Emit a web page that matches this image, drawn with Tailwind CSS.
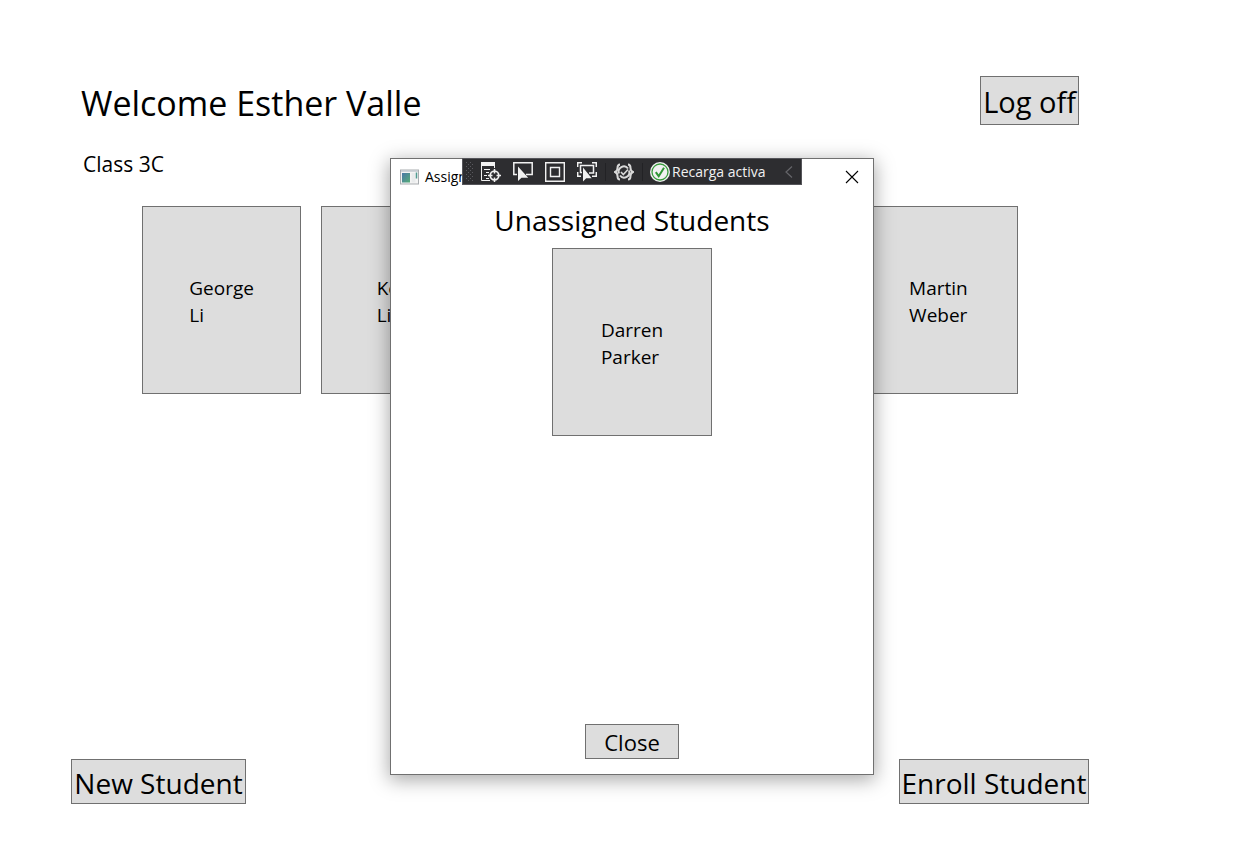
<!DOCTYPE html>
<html lang="en">
<head>
<meta charset="utf-8">
<title>Class 3C</title>
<script src="https://cdn.jsdelivr.net/npm/@tailwindcss/browser@4"></script>
</head>
<body class="bg-white text-black font-['Open_Sans','Noto_Sans',sans-serif]">
<div class="relative flex min-h-screen flex-col pt-[76px] pb-16">
  <header class="flex items-start justify-between pl-[81px] pr-44">
    <h1 class="pt-[3px] text-[34px] leading-[48px]">Welcome Esther Valle</h1>
    <button class="h-[49px] border border-[#707070] bg-[#dddddd] px-0.5 pt-0.5 text-[29px] leading-[46px]">Log off</button>
  </header>
  <h2 class="pl-[83px] pt-[21px] text-[21px] leading-8">Class 3C</h2>
  <main class="flex flex-1 items-start gap-5 pl-[142px] pr-[237px] pt-[26px] text-[19px] leading-[27px]">
    <button class="flex h-[188px] flex-1 items-center justify-center border border-[#707070] bg-[#dddddd] pt-1 text-left"><span>George<br>Li</span></button>
    <button class="flex h-[188px] flex-1 items-center justify-center border border-[#707070] bg-[#dddddd] pt-1 text-left"><span>Kevin<br>Liu</span></button>
    <button class="h-[188px] flex-1 border border-[#707070] bg-[#dddddd]" aria-label="Student"></button>
    <button class="h-[188px] flex-1 border border-[#707070] bg-[#dddddd]" aria-label="Student"></button>
    <button class="flex h-[188px] flex-1 items-center justify-center border border-[#707070] bg-[#dddddd] pt-1 text-left"><span>Martin<br>Weber</span></button>
  </main>
  <footer class="flex justify-between pl-[71px] pr-[166px] text-[28px] leading-[46px]">
    <button class="h-[45px] min-w-[175px] border border-[#707070] bg-[#dddddd]">New Student</button>
    <button class="h-[45px] min-w-[190px] border border-[#707070] bg-[#dddddd]">Enroll Student</button>
  </footer>

  <section role="dialog" aria-label="Assign Student" class="absolute left-[390px] top-[158px] flex h-[617px] w-[484px] flex-col items-center border border-[#707070] bg-white pb-[15px] shadow-[0_4px_18px_1px_rgba(0,0,0,0.34)]">
    <div class="flex w-full items-center pl-[9px] pr-[14px] pt-1">
      <svg class="h-4 w-5" viewBox="0 0 20 16">
        <defs><linearGradient id="pane" x1="0" y1="0" x2="1" y2="1"><stop offset="0" stop-color="#4a78a8"/><stop offset="1" stop-color="#56ad78"/></linearGradient></defs>
        <rect x="0.5" y="1" width="18" height="14" fill="#f4f4f4" stroke="#a9adb0"/>
        <path d="M1 2h17" stroke="#c3cad0" stroke-width="1.5"/>
        <rect x="2" y="4" width="8" height="9.5" fill="url(#pane)"/>
        <rect x="11.500" y="4" width="4" height="9.500" fill="#e9ebec"/>
        <path d="M16.500 3.500v6" stroke="#4f9b91" stroke-width="1.500"/>
      </svg>
      <span class="pl-[5px] text-[14px] leading-7">Assign Student</span>
      <button aria-label="Close window" class="ml-auto flex h-7 w-[14px] items-center justify-center">
        <svg class="h-[14px] w-[14px]" viewBox="0 0 14 14" fill="none" stroke="#000" stroke-width="1.100"><path d="M1 1l12 12M13 1L1 13"/></svg>
      </button>
    </div>
    <h3 class="pt-[9px] text-[28px] leading-10">Unassigned Students</h3>
    <button class="mt-2 flex h-[188px] w-40 items-center justify-center border border-[#707070] bg-[#dddddd] pt-1 text-left text-[19px] leading-[27px]"><span>Darren<br>Parker</span></button>
    <button class="mt-auto h-[35px] w-[94px] border border-[#707070] bg-[#dddddd] text-[22px] leading-[34px]">Close</button>

    <div role="toolbar" aria-label="Debug tools" class="absolute left-[71px] -top-px flex h-[27px] w-[340px] items-center border border-[#55555a] bg-[#2d2d30] pl-[3px] text-[#f1f1f1]">
      <svg class="h-6 w-[7px]" viewBox="0 0 7 24" fill="#5a5a5f"><path d="M0 2h1v1H0zM4 2h1v1H4zM2 4h1v1H2zM6 4h1v1H6zM0 6h1v1H0zM4 6h1v1H4zM2 8h1v1H2zM6 8h1v1H6zM0 10h1v1H0zM4 10h1v1H4zM2 12h1v1H2zM6 12h1v1H6zM0 14h1v1H0zM4 14h1v1H4zM2 16h1v1H2zM6 16h1v1H6zM0 18h1v1H0zM4 18h1v1H4zM2 20h1v1H2zM6 20h1v1H6z"/></svg>
      <button aria-label="Go to live visual tree" class="ml-2 h-5 w-5">
        <svg class="h-5 w-5" viewBox="0 0 20 20" fill="none" stroke="#f1f1f1"><path d="M0 0h14v4H0z" fill="#f1f1f1" stroke="none"/><path d="M.5 3v15.500H9M13.500 3v3M3 7.500h6M5 10.500h3M3 13.500h3M5 16.500h3"/><circle cx="13.500" cy="13.500" r="4.300" stroke-width="1.700"/><path d="M13.500 7v4.500M13.500 15.500V20M7 13.500h4.500M15.500 13.500H20" stroke-width="1.500"/></svg>
      </button>
      <button aria-label="Select element" class="ml-3 h-5 w-5">
        <svg class="h-5 w-5" viewBox="0 0 20 20" fill="none" stroke="#f1f1f1" stroke-width="1.500"><path d="M4 12.500H.8V.8h18.400v11.700H13"/><path d="M5 4.500v14.500l3.500-3.200h6.700z" fill="#f1f1f1" stroke="none"/></svg>
      </button>
      <button aria-label="Display layout adorners" class="ml-3 h-5 w-5">
        <svg class="h-5 w-5" viewBox="0 0 20 20" fill="none" stroke="#f1f1f1"><path d="M.7.700h18.600v18.600H.7z" stroke-width="1.400"/><path d="M5.500 5.500h9v9h-9z" stroke-width="1.400"/></svg>
      </button>
      <button aria-label="Track focused element" class="ml-3 h-5 w-5">
        <svg class="h-5 w-5" viewBox="0 0 20 20" fill="none" stroke="#f1f1f1" stroke-width="1.500"><path d="M.7 5V.8H5M15 .8h4.300V5M.7 10v4.200H4M19.300 10v4.200H15M5 10.500H3.500V3.500h13v7.500H12"/><path d="M6 5.500v14l3.200-3.200h5.500z" fill="#f1f1f1" stroke="none"/></svg>
      </button>
      <span class="ml-2 h-[18px] w-px bg-[#222225]"></span>
      <button aria-label="Binding failures" class="ml-2 h-5 w-5">
        <svg class="h-5 w-5" viewBox="0 0 20 20" fill="none" stroke="#d8d8d8" stroke-width="2"><path d="M6 2.500C3.500 2.500 3.500 4 3.500 6s0 3-2.500 4c2.500 1 2.500 2 2.500 4s0 3.500 2.500 3.500M14 2.500c2.500 0 2.500 1.500 2.500 3.500s0 3 2.500 4c-2.500 1-2.500 2-2.500 4s0 3.500-2.500 3.500"/><path d="M14 6.500A5.200 5.200 0 0 0 5 11.500M6 13.500A5.200 5.200 0 0 0 15 8.500" stroke-width="2"/><path d="M7 10l2.300 2.500L14 7.500" stroke-width="1.600"/></svg>
      </button>
      <span class="ml-2 h-[18px] w-px bg-[#222225]"></span>
      <button class="ml-[7px] flex items-center gap-0.5 whitespace-nowrap text-[14px] leading-5">
        <svg class="h-5 w-5" viewBox="0 0 20 20" fill="none"><circle cx="10" cy="10" r="10" fill="#f1f1f1"/><circle cx="10" cy="10" r="8" stroke="#389b3c" stroke-width="1.300"/><path d="M5.800 10.200l2.900 4L14 5.800" stroke="#2f9634" stroke-width="2"/></svg>
        <span>Recarga activa</span>
      </button>
      <button aria-label="Collapse toolbar" class="ml-auto mr-2 h-3 w-2">
        <svg class="h-3 w-2" viewBox="0 0 8 12" fill="none" stroke="#66666a" stroke-width="1.200"><path d="M7 .5L1 6l6 5.500"/></svg>
      </button>
    </div>
  </section>
</div>
</body>
</html>
